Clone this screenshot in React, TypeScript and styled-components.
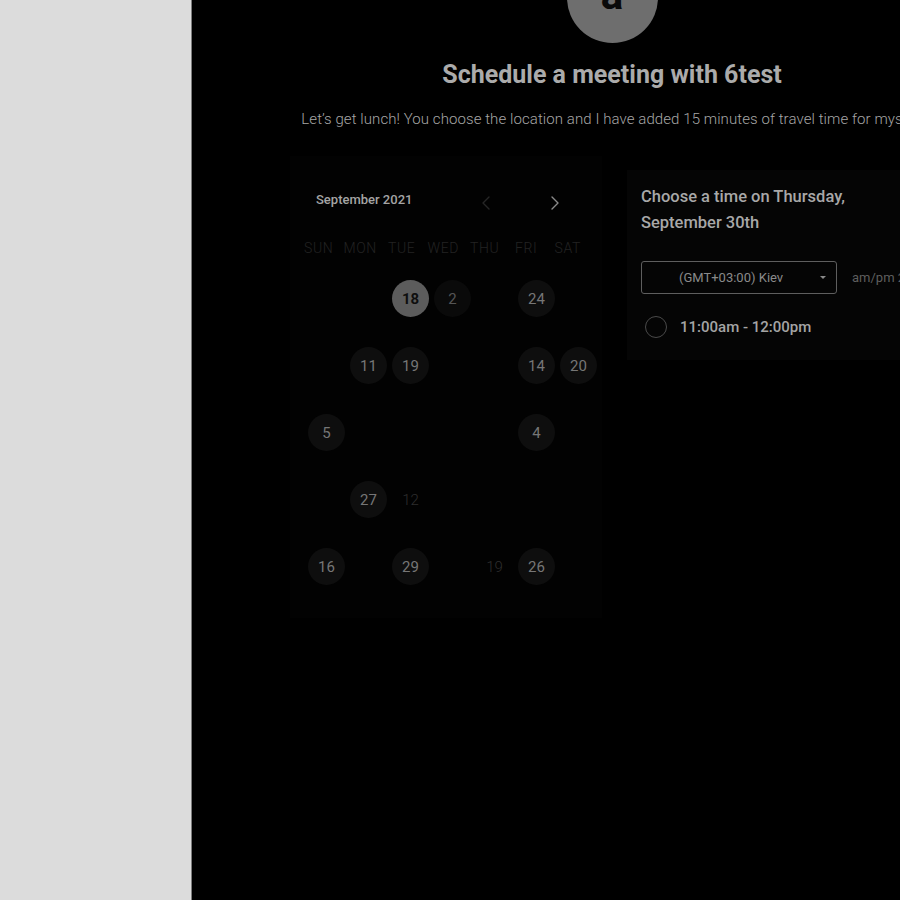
import React from "react";
import styled, { createGlobalStyle } from "styled-components";

const Global = createGlobalStyle`
  html, body { margin: 0; padding: 0; background: #000; }
  body { font-family: Roboto, "Liberation Sans", sans-serif; }
  * { box-sizing: border-box; }
`;

const Shell = styled.div`
  display: flex;
  width: 900px;
  height: 900px;
  overflow: hidden;
`;

const Sidebar = styled.aside`
  width: 192px;
  flex: none;
  background: #dcdcdc;
  border-right: 1px solid #7c7c7c;
`;

const Main = styled.main`
  flex: 1;
  background: #000;
  overflow: hidden;
`;

const Inner = styled.div`
  width: 840px;
  display: flex;
  flex-direction: column;
  align-items: center;
`;

const Avatar = styled.div`
  width: 91px;
  height: 91px;
  margin-top: -48px;
  border-radius: 50%;
  background: #6e6e6e;
  color: #0a0a0a;
  font-size: 42px;
  font-weight: 700;
  display: flex;
  align-items: center;
  justify-content: center;
  line-height: 1;
  padding-bottom: 6px;
`;

const Title = styled.h1`
  margin: 16px 0 0;
  font-size: 25px;
  line-height: 32px;
  font-weight: 700;
  color: #ababab;
`;

const Subtitle = styled.p`
  margin: 18px 0 0;
  font-size: 15px;
  line-height: 20px;
  font-weight: 300;
  color: #a6a6a6;
  letter-spacing: 0.08px;
  white-space: nowrap;
`;

const Content = styled.div`
  align-self: stretch;
  display: flex;
  align-items: flex-start;
  margin-top: 27px;
  padding-left: 98px;
`;

const CalendarPanel = styled.section`
  width: 312px;
  height: 462px;
  background: #020202;
  padding-top: 30px;
`;

const CalHeader = styled.div`
  display: flex;
  align-items: center;
  height: 26px;
  padding-left: 26px;
`;

const Month = styled.div`
  width: 170px;
  font-size: 13px;
  font-weight: 500;
  color: #a4a4a4;
`;

const NavButton = styled.span<{ $dim?: boolean }>`
  display: flex;
  align-items: center;
  justify-content: center;
  width: 12px;
  height: 16px;
  margin-top: 8px;
  color: ${(p) => (p.$dim ? "#262626" : "#8a8a8a")};
  margin-left: ${(p) => (p.$dim ? "-6px" : "57px")};
`;

const WeekRow = styled.div`
  display: grid;
  grid-template-columns: repeat(7, 41.5px);
  margin: 28px 0 0 8px;
`;

const WeekDay = styled.div`
  text-align: center;
  font-size: 14px;
  line-height: 16px;
  font-weight: 300;
  color: #222;
  letter-spacing: 0.6px;
`;

const DayGrid = styled.div`
  display: grid;
  grid-template-columns: repeat(7, 42px);
  grid-auto-rows: 67px;
  margin: 9px 0 0 15px;
`;

const DayCell = styled.div`
  display: flex;
  align-items: center;
  justify-content: center;
`;

type Kind = "selected" | "available" | "faded" | "muted";

const Day = styled.div<{ $kind: Kind }>`
  width: 37px;
  height: 37px;
  border-radius: 50%;
  display: flex;
  align-items: center;
  justify-content: center;
  font-size: 15px;
  padding-top: 1px;
  padding-left: 1px;
  font-weight: ${(p) => (p.$kind === "selected" ? 700 : p.$kind === "muted" ? 300 : 400)};
  background: ${(p) =>
    p.$kind === "selected"
      ? "#5c5c5c"
      : p.$kind === "available"
      ? "#0e0e0e"
      : p.$kind === "faded"
      ? "#0a0a0a"
      : "transparent"};
  color: ${(p) =>
    p.$kind === "selected"
      ? "#0e0e0e"
      : p.$kind === "available"
      ? "#767676"
      : p.$kind === "faded"
      ? "#555"
      : "#2e2e2e"};
`;

const TimePanel = styled.section`
  margin-left: 25px;
  margin-top: 14px;
  width: 300px;
  height: 190px;
  background: #050505;
  padding: 14px 0 0 14px;
`;

const TimeHeading = styled.h2`
  margin: 0;
  font-size: 16.5px;
  line-height: 26px;
  font-weight: 500;
  color: #a8a8a8;
`;

const Controls = styled.div`
  display: flex;
  align-items: center;
  margin-top: 25px;
`;

const Select = styled.div`
  width: 196px;
  height: 33px;
  border: 1px solid #5e5e5e;
  border-radius: 3px;
  display: flex;
  align-items: center;
  padding-left: 37px;
  padding-right: 10px;
  font-size: 13px;
  color: #8a8a8a;
`;

const SelectText = styled.span`
  flex: 1;
`;

const Caret = styled.span`
  width: 0;
  height: 0;
  border-left: 3px solid transparent;
  border-right: 3px solid transparent;
  border-top: 3px solid #8a8a8a;
`;

const FormatToggle = styled.span`
  margin-left: 15px;
  font-size: 13px;
  color: #5e5e5e;
  white-space: nowrap;
`;

const Slot = styled.label`
  display: flex;
  align-items: center;
  margin-top: 22px;
  padding-left: 4px;
  gap: 13px;
`;

const Radio = styled.span`
  width: 22px;
  height: 22px;
  border-radius: 50%;
  border: 1px solid #4a4a4a;
`;

const SlotText = styled.span`
  font-size: 15px;
  font-weight: 500;
  color: #a4a4a4;
`;

const weekdays = ["SUN", "MON", "TUE", "WED", "THU", "FRI", "SAT"];

const cells: (null | { n: string; k: Kind })[] = [
  null, null, { n: "18", k: "selected" }, { n: "2", k: "faded" }, null, { n: "24", k: "available" }, null,
  null, { n: "11", k: "available" }, { n: "19", k: "available" }, null, null, { n: "14", k: "available" }, { n: "20", k: "available" },
  { n: "5", k: "available" }, null, null, null, null, { n: "4", k: "available" }, null,
  null, { n: "27", k: "available" }, { n: "12", k: "muted" }, null, null, null, null,
  { n: "16", k: "available" }, null, { n: "29", k: "available" }, null, { n: "19", k: "muted" }, { n: "26", k: "available" }, null,
];

const Chevron = ({ dir }: { dir: "left" | "right" }) => (
  <svg width="8" height="14" viewBox="0 0 8 14" fill="none">
    <path
      d={dir === "left" ? "M7 1 L1 7 L7 13" : "M1 1 L7 7 L1 13"}
      stroke="currentColor"
      strokeWidth="1.4"
      strokeLinecap="round"
      strokeLinejoin="round"
    />
  </svg>
);

export default function App() {
  return (
    <>
      <Global />
      <Shell>
        <Sidebar />
        <Main>
          <Inner>
            <Avatar>a</Avatar>
            <Title>Schedule a meeting with 6test</Title>
            <Subtitle>
              Let’s get lunch! You choose the location and I have added 15 minutes of travel time for myself.
            </Subtitle>
            <Content>
              <CalendarPanel>
                <CalHeader>
                  <Month>September 2021</Month>
                  <NavButton $dim>
                    <Chevron dir="left" />
                  </NavButton>
                  <NavButton>
                    <Chevron dir="right" />
                  </NavButton>
                </CalHeader>
                <WeekRow>
                  {weekdays.map((w) => (
                    <WeekDay key={w}>{w}</WeekDay>
                  ))}
                </WeekRow>
                <DayGrid>
                  {cells.map((c, i) => (
                    <DayCell key={i}>{c && <Day $kind={c.k}>{c.n}</Day>}</DayCell>
                  ))}
                </DayGrid>
              </CalendarPanel>
              <TimePanel>
                <TimeHeading>
                  Choose a time on Thursday,
                  <br />
                  September 30th
                </TimeHeading>
                <Controls>
                  <Select>
                    <SelectText>(GMT+03:00) Kiev</SelectText>
                    <Caret />
                  </Select>
                  <FormatToggle>am/pm 24h</FormatToggle>
                </Controls>
                <Slot>
                  <Radio />
                  <SlotText>11:00am - 12:00pm</SlotText>
                </Slot>
              </TimePanel>
            </Content>
          </Inner>
        </Main>
      </Shell>
    </>
  );
}
